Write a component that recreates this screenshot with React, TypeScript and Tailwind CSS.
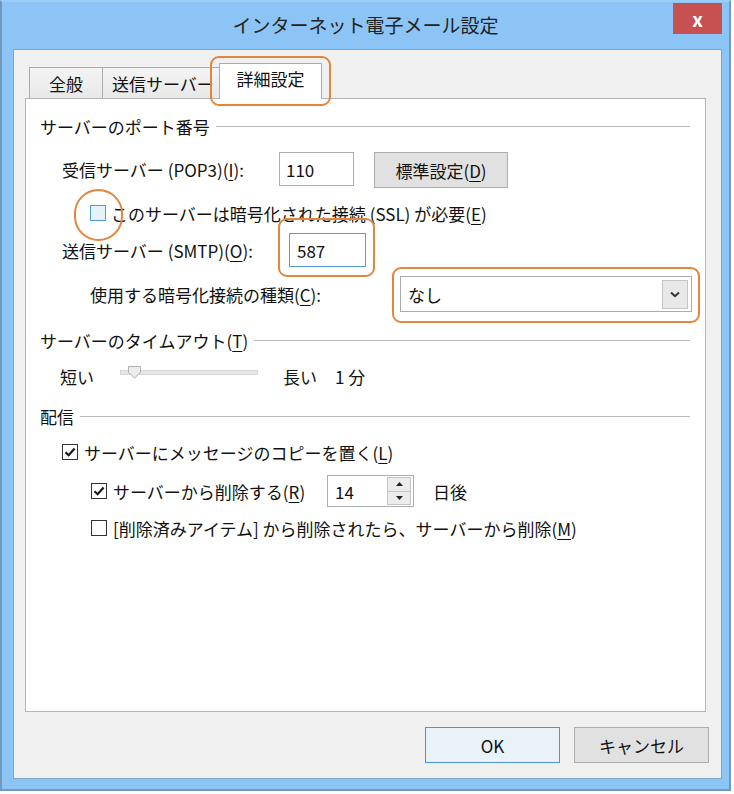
import React from "react";

const FONT = "font-['Noto_Sans_CJK_JP','Noto_Sans',sans-serif]";

function U({ children }: { children: React.ReactNode }) {
  return <span className="underline decoration-1 underline-offset-[3px]">{children}</span>;
}

function Check({ checked = false, hover = false }: { checked?: boolean; hover?: boolean }) {
  return (
    <span
      className={`flex h-[16px] w-[16px] shrink-0 items-center justify-center border ${
        hover ? "border-[#4c9ae6] bg-[#e6f2fc]" : "border-[#333333] bg-white"
      }`}
    >
      {checked && (
        <svg width="12" height="12" viewBox="0 0 12 12">
          <path d="M1.5 6.2 L4.6 9.2 L10.6 2.4" fill="none" stroke="#1a1a1a" strokeWidth="2.2" />
        </svg>
      )}
    </span>
  );
}

function Header({ label }: { label: React.ReactNode }) {
  return (
    <div className="flex h-[24px] items-center pl-[14px] pr-[15px]">
      <span className="whitespace-nowrap">{label}</span>
      <span className="ml-[6px] h-px flex-1 bg-[#b8b8b8]" />
    </div>
  );
}

export default function App() {
  return (
    <div className={`relative h-[794px] w-[734px] bg-white text-[17px] leading-none text-[#111] ${FONT}`}>
      {/* window frame */}
      <div className="relative flex h-[791px] w-[731px] flex-col border-2 border-[#6f99bf] border-t-[#9ccdf6] bg-[#8cc5f5]">
        {/* title bar */}
        <div className="flex h-[47px] shrink-0 items-center justify-center pb-[2px] text-[19px] text-[#222]">
          インターネット電子メール設定
        </div>

        {/* client area */}
        <div className="ml-[11px] mr-[7px] flex h-[730px] flex-col border border-[#7ea6c9] bg-[#f0f0f0]">
          {/* tabs */}
          <div className="flex h-[48px] shrink-0 items-end pl-[15px]">
            <div className="flex h-[31px] w-[74px] items-center justify-center border border-b-0 border-[#acacac] bg-gradient-to-b from-[#f4f4f4] to-[#e8e8e8]">
              全般
            </div>
            <div className="-ml-px flex h-[31px] w-[119px] items-center overflow-hidden whitespace-nowrap border border-b-0 border-[#acacac] bg-gradient-to-b from-[#f4f4f4] to-[#e8e8e8] pl-[9px]">
              送信サーバー
            </div>
            <div className="relative z-10 -mb-px -ml-[2px] flex h-[36px] w-[103px] items-center justify-center border border-b-0 border-[#acacac] bg-white pb-[6px]">
              詳細設定
            </div>
          </div>

          {/* panel */}
          <div className="ml-[11px] flex h-[614px] w-[681px] shrink-0 flex-col border border-[#b5b5b5] bg-white">
            <div className="mt-[15px]">
              <Header label="サーバーのポート番号" />
            </div>

            {/* POP3 */}
            <div className="mt-[14px] flex h-[36px] items-start pl-[36px]">
              <span className="flex h-[34px] w-[217px] items-center whitespace-nowrap">
                受信サーバー (POP3)(<U>I</U>):
              </span>
              <span className="flex h-[34px] w-[75px] items-center border border-[#abadb3] bg-white pl-[6px]">110</span>
              <button className="ml-[20px] flex h-[36px] w-[134px] items-center justify-center border border-[#adadad] bg-[#e1e1e1]">
                標準設定(<U>D</U>)
              </button>
            </div>

            {/* SSL */}
            <div className="mt-[13px] flex h-[24px] items-center gap-[5px] pl-[64px]">
              <Check hover />
              <span className="whitespace-nowrap">
                このサーバーは暗号化された接続 (SSL) が必要(<U>E</U>)
              </span>
            </div>

            {/* SMTP */}
            <div className="mt-[8px] flex h-[34px] items-center pl-[36px]">
              <span className="w-[227px] whitespace-nowrap">
                送信サーバー (SMTP)(<U>O</U>):
              </span>
              <span className="flex h-[34px] w-[77px] items-center border border-[#569de5] bg-white pl-[7px]">587</span>
            </div>

            {/* encryption */}
            <div className="mt-[9px] flex h-[36px] items-center pl-[64px]">
              <span className="w-[310px] whitespace-nowrap">
                使用する暗号化接続の種類(<U>C</U>):
              </span>
              <div className="flex h-[36px] w-[292px] items-center justify-between border border-[#acacac] bg-white pl-[7px] pr-[3px]">
                <span>なし</span>
                <span className="flex h-[29px] w-[26px] items-center justify-center border border-[#c4c4c4] bg-[#e8e8e8]">
                  <svg width="10" height="7" viewBox="0 0 10 7">
                    <path d="M1 1.5 L5 5.2 L9 1.5" fill="none" stroke="#333" strokeWidth="2" />
                  </svg>
                </span>
              </div>
            </div>

            <div className="mt-[16px]">
              <Header
                label={
                  <>
                    サーバーのタイムアウト(<U>T</U>)
                  </>
                }
              />
            </div>

            {/* slider */}
            <div className="mt-[12px] flex h-[24px] items-center pl-[34px]">
              <span className="w-[60px]">短い</span>
              <div className="relative h-[24px] w-[138px]">
                <div className="absolute left-0 right-0 top-[6px] h-[5px] border border-[#d6d6d6] bg-[#e7e7e7]" />
                <svg className="absolute left-[8px] top-[2px]" width="13" height="13" viewBox="0 0 13 13">
                  <path d="M0.5 0.5 H12.5 V6.5 L6.5 12 L0.5 6.5 Z" fill="#ececec" stroke="#b0b0b0" />
                </svg>
              </div>
              <span className="ml-[25px]">長い</span>
              <span className="ml-[18px]">1 分</span>
            </div>

            <div className="mt-[16px]">
              <Header label="配信" />
            </div>

            {/* leave copy */}
            <div className="mt-[12px] flex h-[24px] items-center gap-[6px] pl-[36px]">
              <Check checked />
              <span className="whitespace-nowrap">
                サーバーにメッセージのコピーを置く(<U>L</U>)
              </span>
            </div>

            {/* delete after */}
            <div className="mt-[11px] flex h-[32px] items-center pl-[65px]">
              <Check checked />
              <span className="ml-[6px] w-[214px] whitespace-nowrap">
                サーバーから削除する(<U>R</U>)
              </span>
              <div className="flex h-[32px] w-[87px] items-center justify-between border border-[#abadb3] bg-white pl-[7px] pr-[2px]">
                <span>14</span>
                <div className="flex h-[28px] w-[24px] flex-col border border-[#c4c4c4]">
                  <span className="flex flex-1 items-center justify-center border-b border-[#c4c4c4] bg-[#ececec]">
                    <svg width="7" height="4" viewBox="0 0 7 4">
                      <path d="M0 4 L3.5 0 L7 4 Z" fill="#222" />
                    </svg>
                  </span>
                  <span className="flex flex-1 items-center justify-center bg-[#ececec]">
                    <svg width="7" height="4" viewBox="0 0 7 4">
                      <path d="M0 0 L3.5 4 L7 0 Z" fill="#222" />
                    </svg>
                  </span>
                </div>
              </div>
              <span className="ml-[19px]">日後</span>
            </div>

            {/* delete when removed */}
            <div className="mt-[9px] flex h-[24px] items-center gap-[6px] pl-[65px]">
              <Check />
              <span className="whitespace-nowrap">
                [削除済みアイテム] から削除されたら、サーバーから削除(<U>M</U>)
              </span>
            </div>
          </div>

          {/* buttons */}
          <div className="mt-[15px] flex justify-end gap-[14px] pr-[12px]">
            <button className="flex h-[36px] w-[135px] items-center justify-center border border-[#4d94dc] bg-[#e9f1f9]">
              OK
            </button>
            <button className="flex h-[36px] w-[135px] items-center justify-center border border-[#adadad] bg-[#e1e1e1]">
              キャンセル
            </button>
          </div>
        </div>

        {/* close button */}
        <div className="absolute left-[671px] top-[1px] flex h-[31px] w-[49px] items-center justify-center bg-[#c75050] text-[19px] font-bold text-white">
          x
        </div>
      </div>

      {/* orange annotation marks */}
      <div className="pointer-events-none absolute left-[210px] top-[56px] h-[50px] w-[121px] rounded-[9px] border-[2.5px] border-[#e5853b]" />
      <div className="pointer-events-none absolute left-[74px] top-[189px] h-[52px] w-[49px] rounded-full border-[2.5px] border-[#e5853b]" />
      <div className="pointer-events-none absolute left-[278px] top-[218px] h-[59px] w-[97px] rounded-[9px] border-[2.5px] border-[#e5853b]" />
      <div className="pointer-events-none absolute left-[392px] top-[267px] h-[56px] w-[308px] rounded-[9px] border-[2.5px] border-[#e5853b]" />
    </div>
  );
}
